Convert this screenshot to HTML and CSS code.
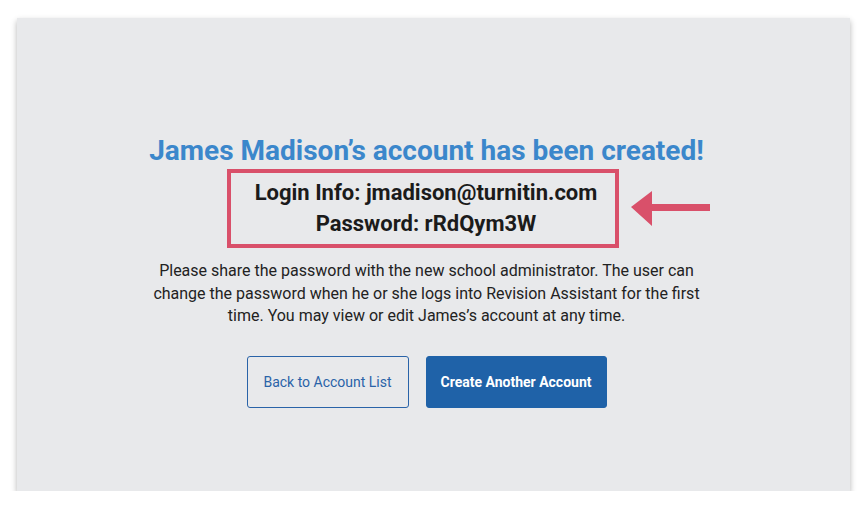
FILE: index.html
```html
<!DOCTYPE html>
<html>
<head>
<meta charset="utf-8">
<link rel="stylesheet" href="styles.css">
</head>
<body>
<div class="card">
  <div class="content">
    <h1 class="title">James Madison’s account has been created!</h1>
    <div class="info-row">
      <div class="info-box">
        <div class="info-line">Login Info: jmadison@turnitin.com</div>
        <div class="info-line">Password: rRdQym3W</div>
      </div>
      <svg class="arrow" width="80" height="36" viewBox="0 0 80 36">
        <polygon points="0,16 21,0 21,13 79,13 79,20 21,20 21,35" fill="#d9506a"/>
      </svg>
    </div>
    <p class="message">Please share the password with the new school administrator. The user can change the password when he or she logs into Revision Assistant for the first time. You may view or edit James’s account at any time.</p>
    <div class="actions">
      <button class="btn btn-outline">Back to Account List</button>
      <button class="btn btn-primary">Create Another Account</button>
    </div>
  </div>
</div>
</body>
</html>
```
FILE: styles.css
```css
html, body {
  margin: 0;
  padding: 0;
  background: #ffffff;
}
body {
  padding: 18px 17px 0 17px;
  font-family: Roboto, "Liberation Sans", sans-serif;
}
.card {
  width: 833px;
  height: 473px;
  background: #e8e9eb;
  box-shadow: 0 3px 6px rgba(0,0,0,0.3);
  box-sizing: border-box;
  padding: 117px 14px 0 0;
}
.content {
  display: flex;
  flex-direction: column;
  align-items: center;
}
.title {
  margin: 0;
  font-size: 28px;
  line-height: 32px;
  font-weight: 700;
  color: #3b87cb;
}
.info-row {
  position: relative;
  margin-top: 2px;
  margin-right: 7px;
}
.info-box {
  border: 4px solid #d9506a;
  width: 392px;
  height: 79px;
  box-sizing: border-box;
  display: flex;
  flex-direction: column;
  align-items: center;
  justify-content: center;
  gap: 3px;
  padding-left: 6px;
}
.info-line {
  font-size: 22px;
  line-height: 28px;
  font-weight: 700;
  color: #1b1b1b;
}
.arrow {
  position: absolute;
  left: 404px;
  top: 22px;
}
.message {
  margin: 12px 0 0 0;
  width: 560px;
  text-align: center;
  font-size: 16px;
  line-height: 22.5px;
  color: #222;
}
.actions {
  margin-top: 28px;
  display: flex;
  gap: 17px;
}
.btn {
  height: 52px;
  border-radius: 3px;
  font-family: Roboto, "Liberation Sans", sans-serif;
  font-size: 14px;
  padding: 0;
  white-space: nowrap;
  cursor: pointer;
}
.btn-outline {
  background: transparent;
  border: 1px solid #2a63a8;
  color: #2a63a8;
  width: 162px;
}
.btn-primary {
  background: #1f62a8;
  border: 1px solid #1f62a8;
  color: #fff;
  font-weight: 700;
  width: 181px;
}
```
